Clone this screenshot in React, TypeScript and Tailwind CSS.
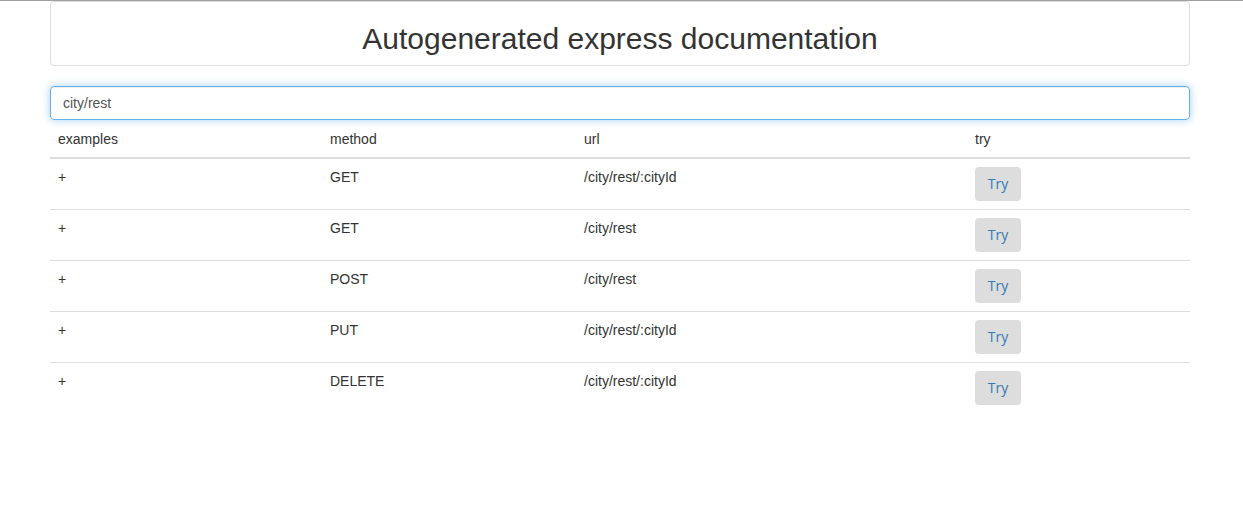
import React from 'react';

const rows = [
  { method: 'GET', url: '/city/rest/:cityId' },
  { method: 'GET', url: '/city/rest' },
  { method: 'POST', url: '/city/rest' },
  { method: 'PUT', url: '/city/rest/:cityId' },
  { method: 'DELETE', url: '/city/rest/:cityId' },
];

export default function App() {
  return (
    <div className="min-h-[522px] bg-white text-[14px] leading-[20px] text-[#333]" style={{ fontFamily: '"Liberation Sans", Arial, sans-serif' }}>
      <div className="h-px bg-[#a0a0a0]" />
      <div className="ml-[50px] w-[1140px]">
        {/* Header */}
        <div className="flex h-[65px] items-center justify-center rounded-[4px] border border-[#ddd] bg-white">
          <h1 className="pt-[9px] text-[30px] leading-[33px] text-[#333]">Autogenerated express documentation</h1>
        </div>

        {/* Search */}
        <input
          defaultValue="city/rest"
          className="mt-[20px] block h-[34px] w-full rounded-[4px] border border-[#66afe9] px-[12px] text-[14px] text-[#555] shadow-[inset_0_1px_1px_rgba(0,0,0,0.075),0_0_8px_rgba(102,175,233,0.6)] outline-none"
        />

        {/* Table */}
        <table className="mt-px w-full border-collapse">
          <thead>
            <tr className="border-b-2 border-[#ddd] text-left">
              <th className="w-[272px] p-[8px] font-normal">examples</th>
              <th className="w-[254px] p-[8px] font-normal">method</th>
              <th className="w-[391px] p-[8px] font-normal">url</th>
              <th className="p-[8px] font-normal">try</th>
            </tr>
          </thead>
          <tbody>
            {rows.map((r, i) => (
              <tr key={i} className={i < rows.length - 1 ? 'border-b border-[#ddd]' : ''}>
                <td className="p-[8px] align-top">+</td>
                <td className="p-[8px] align-top">{r.method}</td>
                <td className="p-[8px] align-top">{r.url}</td>
                <td className="p-[8px] align-top">
                  <button className="h-[34px] w-[46px] rounded-[4px] bg-[#ddd] text-[14px] text-[#337ab7]" style={{ fontFamily: '"Open Sans", sans-serif' }}>
                    Try
                  </button>
                </td>
              </tr>
            ))}
          </tbody>
        </table>
      </div>
    </div>
  );
}
